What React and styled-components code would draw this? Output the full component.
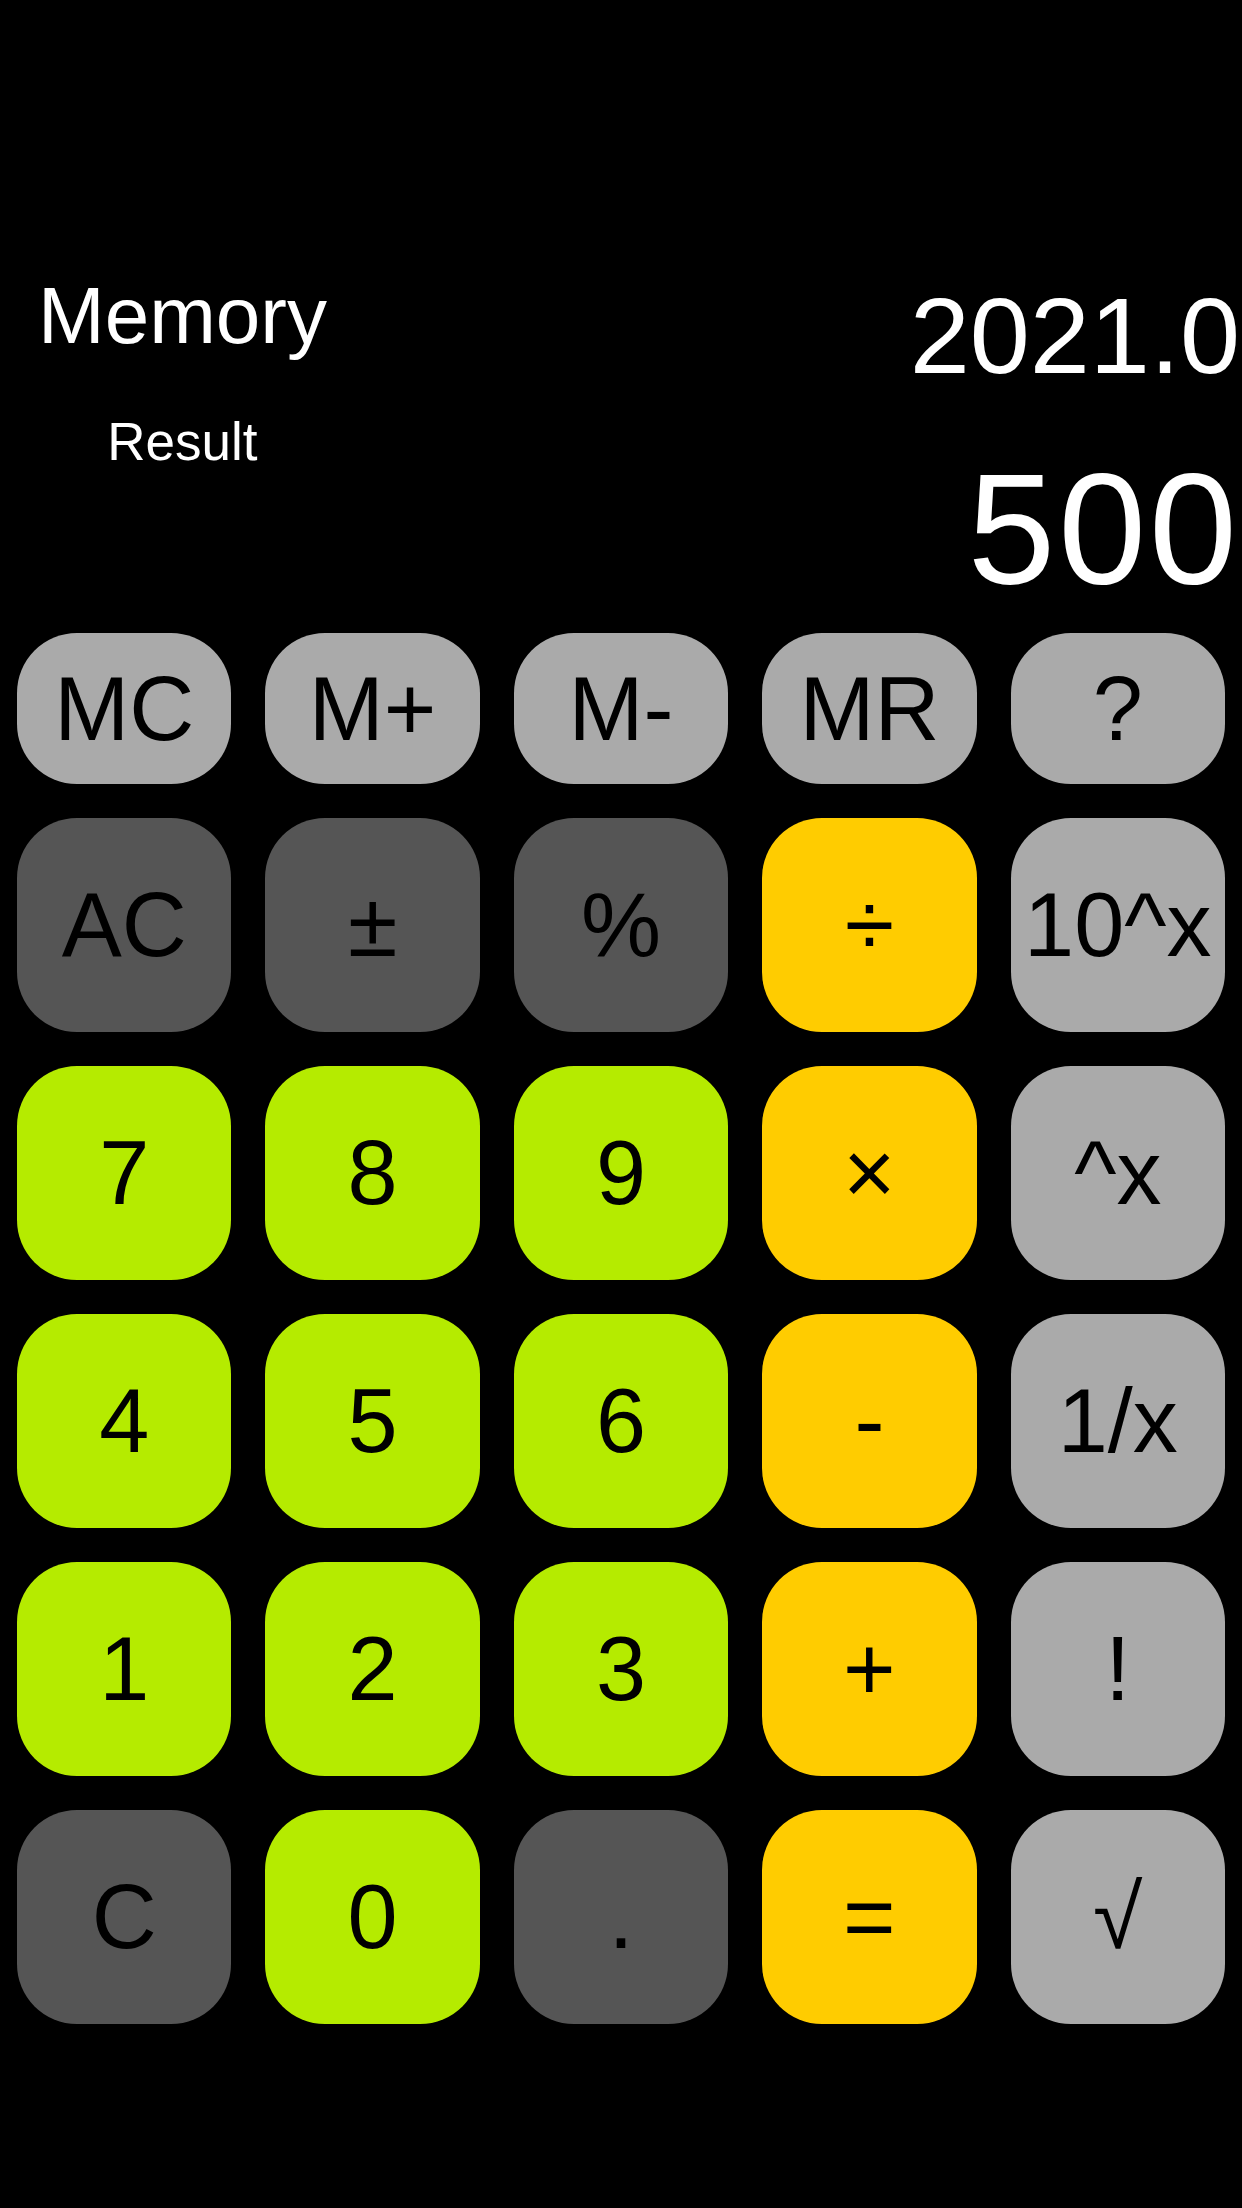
import React from 'react';
import styled, { createGlobalStyle } from 'styled-components';

const GlobalStyle = createGlobalStyle`
	html, body {
		margin: 0;
		padding: 0;
		background: #000;
	}
	body {
		font-family: "Liberation Sans", Arial, sans-serif;
	}
`;

const tones = {
	memory: '#aaaaaa',
	func: '#555555',
	digit: '#b5eb00',
	op: '#ffcc00',
	sci: '#aaaaaa'
};

const Screen = styled.div`
	width: 1242px;
	height: 2208px;
	background: #000;
	display: flex;
	flex-direction: column;
	padding-top: 276px;
	box-sizing: border-box;
`;

const Display = styled.div`
	display: grid;
	grid-template-columns: auto 1fr;
	padding: 0 2px 0 38px;
	color: #fff;
`;

const Label = styled.div`
	justify-self: center;
	font-size: ${p => p.$size}px;
	line-height: 1;
	margin-top: ${p => p.$offset || 0}px;
	white-space: nowrap;
`;

const Value = styled.div`
	justify-self: end;
	font-size: ${p => p.$size}px;
	letter-spacing: ${p => p.$spacing || 0}px;
	line-height: 1;
	margin-top: ${p => p.$offset || 0}px;
	white-space: nowrap;
`;

const Keypad = styled.div`
	display: grid;
	grid-template-columns: repeat(5, 1fr);
	grid-template-rows: 151px repeat(5, 214px);
	gap: 34px;
	padding: 0 17px;
	margin-top: 26px;
`;

const Key = styled.button`
	border: none;
	padding: 0;
	margin: 0;
	border-radius: 60px;
	background: ${p => tones[p.$tone]};
	color: #000;
	font-family: "Liberation Sans", Arial, "DejaVu Sans", sans-serif;
	font-size: 90px;
	line-height: 1;
	display: flex;
	align-items: center;
	justify-content: center;
	white-space: nowrap;
	overflow: visible;
`;

const keys = [
	['MC', 'memory'], ['M+', 'memory'], ['M-', 'memory'], ['MR', 'memory'], ['?', 'memory'],
	['AC', 'func'], ['±', 'func'], ['%', 'func'], ['÷', 'op'], ['10^x', 'sci'],
	['7', 'digit'], ['8', 'digit'], ['9', 'digit'], ['×', 'op'], ['^x', 'sci'],
	['4', 'digit'], ['5', 'digit'], ['6', 'digit'], ['-', 'op'], ['1/x', 'sci'],
	['1', 'digit'], ['2', 'digit'], ['3', 'digit'], ['+', 'op'], ['!', 'sci'],
	['C', 'func'], ['0', 'digit'], ['.', 'func'], ['=', 'op'], ['√', 'sci']
];

export default function App() {
	return (
		<>
			<GlobalStyle />
			<Screen>
				<Display>
					<Label $size={80}>Memory</Label>
					<Value $size={108} $offset={6}>2021.0</Value>
					<Label $size={53} $offset={25}>Result</Label>
					<Value $size={158} $spacing={3} $offset={59}>500</Value>
				</Display>
				<Keypad>
					{keys.map(([label, tone]) => (
						<Key key={label} $tone={tone}>{label}</Key>
					))}
				</Keypad>
			</Screen>
		</>
	);
}
